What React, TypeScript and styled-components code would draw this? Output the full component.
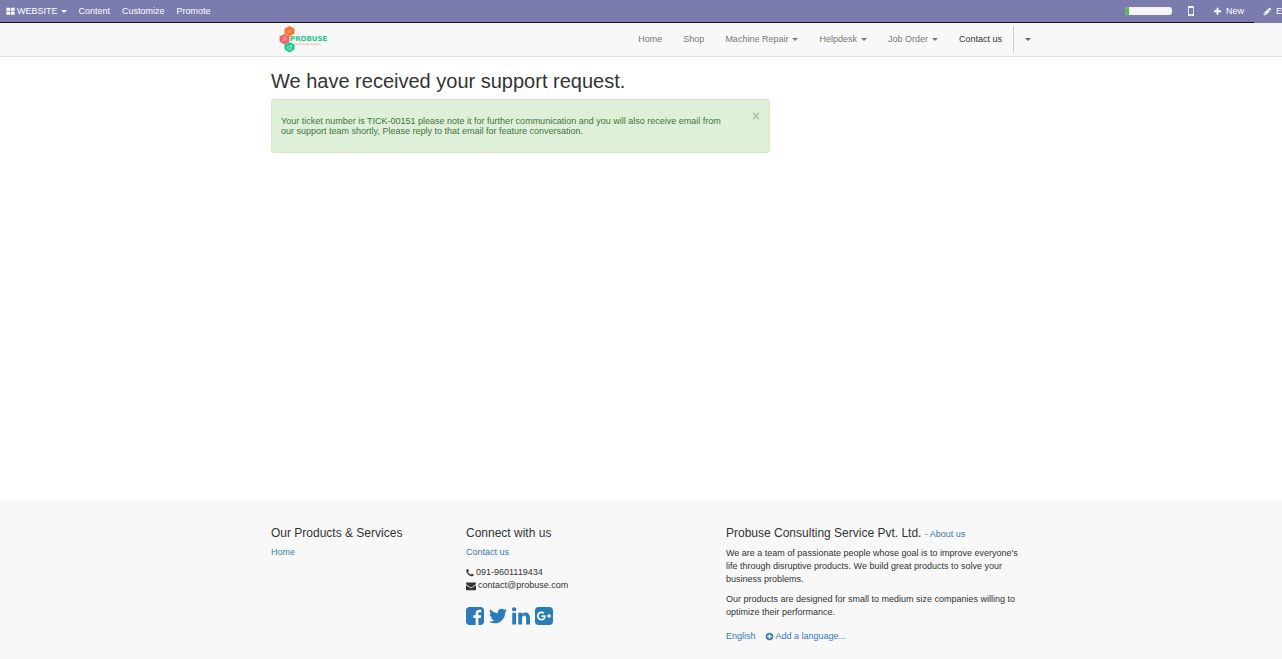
import React from "react";
import styled, { createGlobalStyle } from "styled-components";

const GlobalStyle = createGlobalStyle`
  *, *::before, *::after { box-sizing: border-box; }
  html { overflow-x: hidden; }
  body {
    margin: 0;
    overflow-x: hidden;
    background: #fff;
    color: #333;
    font: 9px/13px "Liberation Sans", Arial, sans-serif;
  }
  h1, h4, p, ul { margin: 0; padding: 0; }
  h1, h4 { font-weight: 400; }
  ul { list-style: none; }
  button { font: inherit; background: none; border: 0; padding: 0; cursor: pointer; }
`;

const Page = styled.div`
  display: flex;
  flex-direction: column;
  width: calc(100% + 20px);
  min-height: 100vh;
`;

const Container = styled.div`
  width: 100%;
  max-width: 780px;
  margin: 0 auto;
  padding: 0 10px;
`;

/* Icons */
const Svg = styled.svg<{ $w: number; $h?: number }>`
  display: block;
  flex: none;
  width: ${(p) => p.$w}px;
  height: ${(p) => p.$h ?? p.$w}px;
  fill: currentColor;
`;

const icons = {
  thLarge:
    "M832 1024v384q0 52-38 90t-90 38h-512q-52 0-90-38t-38-90v-384q0-52 38-90t90-38h512q52 0 90 38t38 90zm0-768v384q0 52-38 90t-90 38h-512q-52 0-90-38t-38-90v-384q0-52 38-90t90-38h512q52 0 90 38t38 90zm896 768v384q0 52-38 90t-90 38h-512q-52 0-90-38t-38-90v-384q0-52 38-90t90-38h512q52 0 90 38t38 90zm0-768v384q0 52-38 90t-90 38h-512q-52 0-90-38t-38-90v-384q0-52 38-90t90-38h512q52 0 90 38t38 90z",
  mobile:
    "M976 1408q0-33-23.5-56.5t-56.5-23.5-56.5 23.5-23.5 56.5 23.5 56.5 56.5 23.5 56.5-23.5 23.5-56.5zm208-160v-704q0-13-9.5-22.5t-22.5-9.5h-512q-13 0-22.5 9.5t-9.5 22.5v704q0 13 9.5 22.5t22.5 9.5h512q13 0 22.5-9.5t9.5-22.5zm-192-848q0-16-16-16h-160q-16 0-16 16t16 16h160q16 0 16-16zm288-16v1024q0 52-38 90t-90 38h-512q-52 0-90-38t-38-90v-1024q0-52 38-90t90-38h512q52 0 90 38t38 90z",
  plus: "M1600 736v192q0 40-28 68t-68 28h-416v416q0 40-28 68t-68 28h-192q-40 0-68-28t-28-68v-416h-416q-40 0-68-28t-28-68v-192q0-40 28-68t68-28h416v-416q0-40 28-68t68-28h192q40 0 68 28t28 68v416h416q40 0 68 28t28 68z",
  pencil:
    "M491 1536l91-91-235-235-91 91v107h128v128h107zm523-928q0-22-22-22-10 0-17 7l-542 542q-7 7-7 17 0 22 22 22 10 0 17-7l542-542q7-7 7-17zm-54-192l416 416-832 832h-416v-416zm683 96q0 53-37 90l-166 166-416-416 166-165q36-38 90-38 53 0 91 38l235 234q37 39 37 91z",
  phone:
    "M1600 1240q0 27-10 70.5t-21 68.5q-21 50-122 106-94 51-186 51-27 0-52.5-3.5t-57.5-12.5-47.5-14.5-55.5-20.5-49-18q-98-35-175-83-128-79-264.5-215.5t-215.5-264.5q-48-77-83-175-3-9-18-49t-20.5-55.5-14.5-47.5-12.5-57.5-3.5-52.5q0-92 51-186 56-101 106-122 25-11 68.5-21t70.5-10q14 0 21 3 18 6 53 76 11 19 30 54t35 63.5 31 53.5q3 4 17.5 25t21.5 35.5 7 28.5q0 20-28.5 50t-62 55-62 53-28.5 46q0 9 5 22.5t8.5 20.5 14 24 11.5 19q76 137 174 235t235 174q2 1 19 11.5t24 14 20.5 8.5 22.5 5q18 0 46-28.5t53-62 55-62 50-28.5q14 0 28.5 7t35.5 21.5 25 17.5q25 15 53.5 31t63.5 35 54 30q70 35 76 53 3 7 3 21z",
  envelope:
    "M1792 710v794q0 66-47 113t-113 47h-1472q-66 0-113-47t-47-113v-794q44 49 101 87 362 246 497 345 57 42 92.5 65.5t94.5 48 110 24.5h2q51 0 110-24.5t94.5-48 92.5-65.5q170-123 498-345 57-39 100-87zm0-294q0 79-49 151t-122 123q-376 261-468 325-10 7-42.5 31t-54 38.5-52 32.5-57.5 27-50 9h-2q-23 0-50-9t-57.5-27-52-32.5-54-38.5-42.5-31q-91-64-262-182.5t-205-142.5q-62-42-117-115.5t-55-136.5q0-78 41.5-130t118.5-52h1472q65 0 112.5 47t47.5 113z",
  plusCircle:
    "M1344 960v-128q0-26-19-45t-45-19h-256v-256q0-26-19-45t-45-19h-128q-26 0-45 19t-19 45v256h-256q-26 0-45 19t-19 45v128q0 26 19 45t45 19h256v256q0 26 19 45t45 19h128q26 0 45-19t19-45v-256h256q26 0 45-19t19-45zm320-64q0 209-103 385.5t-279.5 279.5-385.5 103-385.5-103-279.5-279.5-103-385.5 103-385.5 279.5-279.5 385.5-103 385.5 103 279.5 279.5 103 385.5z",
  facebook:
    "M1376 128q119 0 203.5 84.5t84.5 203.5v960q0 119-84.5 203.5t-203.5 84.5h-188v-595h199l30-232h-229v-148q0-56 23.5-84t91.5-28l122-1v-207q-63-9-178-9-136 0-217.5 80t-81.5 226v171h-200v232h200v595h-532q-119 0-203.5-84.5t-84.5-203.5v-960q0-119 84.5-203.5t203.5-84.5h960z",
  twitter:
    "M1684 408q-67 98-162 167 1 14 1 42 0 130-38 259.5t-115.5 248.5-184.5 210.5-258 146-323 54.5q-271 0-496-145 35 4 78 4 225 0 401-138-105-2-188-64.5t-114-159.5q33 5 61 5 43 0 85-11-112-23-185.5-111.5t-73.5-205.5v-4q68 38 146 41-66-44-105-115t-39-154q0-88 44-163 121 149 294.5 238.5t371.5 99.5q-8-38-8-74 0-134 94.5-228.5t228.5-94.5q140 0 236 102 109-21 205-78-37 115-142 178 93-10 186-50z",
  linkedin:
    "M477 625v991h-330v-991h330zm21-306q1 73-50.5 122t-135.5 49h-2q-82 0-132-49t-50-122q0-74 51.5-122.5t134.5-48.5 133 48.5 51 122.5zm1166 729v568h-329v-530q0-105-40.5-164.5t-126.5-59.5q-63 0-105.5 34.5t-63.5 85.5q-11 30-11 81v553h-329q2-399 2-647t-1-296l-1-48h329v144h-2q20-32 41-56t56.5-52 87-43.5 114.5-15.5q171 0 275 113.5t104 332.5z",
  googlePlus:
    "M1045 905q0-26-6-64h-362v132h217q-3 24-16.5 50t-37.5 53-66.5 44.5-96.5 17.5q-99 0-169-71t-70-171 70-171 169-71q92 0 153 59l104-101q-108-100-257-100-160 0-272 112.5t-112 271.5 112 271.5 272 112.5q165 0 266.5-105t101.5-270zm345 46h109v-110h-109v-110h-110v110h-110v110h110v110h110v-110zm274-535v960q0 119-84.5 203.5t-203.5 84.5h-960q-119 0-203.5-84.5t-84.5-203.5v-960q0-119 84.5-203.5t203.5-84.5h960q119 0 203.5 84.5t84.5 203.5z",
};

type IconProps = { name: keyof typeof icons; w?: number; box?: string };
const Icon = ({ name, w = 9, box = "0 0 1792 1792" }: IconProps) => (
  <Svg $w={w} viewBox={box} aria-hidden="true">
    <path d={icons[name]} />
  </Svg>
);

const Caret = styled.span`
  display: inline-block;
  border: 3px solid transparent;
  border-top-color: currentColor;
  border-bottom: 0;
`;

/* Editor bar */
const AdminBar = styled.nav`
  display: flex;
  justify-content: space-between;
  height: 23px;
  background: #7c7bad;
`;

const AdminGroup = styled.div`
  display: flex;
  align-items: stretch;
  border-bottom: 1px solid #111;
`;

const AdminMenu = styled(AdminGroup)`
  flex: 1;
  gap: 12px;
  padding-left: 6px;
`;

const AdminButton = styled.button`
  display: flex;
  align-items: center;
  gap: 4px;
  color: #fff;
`;

const SiteButton = styled(AdminButton)`
  gap: 2px;
  ${Caret} { margin-left: 1px; }
`;

const AdminTools = styled(AdminGroup)`
  align-items: center;
  padding-right: 10px;
`;

const Meter = styled.div`
  width: 47px;
  height: 8px;
  margin-right: 12px;
  border-radius: 3px;
  background: #f5f5f5;
  overflow: hidden;
`;

const MeterFill = styled.div`
  width: 4px;
  height: 100%;
  background: #5cb85c;
`;

const MobileButton = styled(AdminButton)`
  margin-right: 15px;
`;

const EditButton = styled(AdminButton)`
  width: 48px;
  padding-left: 9px;
  border-bottom: 1px solid #7c7bad;
`;

/* Site header */
const SiteHeader = styled.header`
  height: 34px;
  background: #f8f8f8;
  border-bottom: 1px solid #e0e0e0;
`;

const HeaderRow = styled(Container)`
  display: flex;
  justify-content: space-between;
  height: 33px;
`;

const Brand = styled.a`
  display: block;
  padding: 3px 0 0 8px;
`;

const NavList = styled.ul`
  display: flex;
  align-items: flex-start;
  gap: 1px;
  padding-top: 3px;
`;

const NavLink = styled.a<{ $active?: boolean }>`
  display: flex;
  align-items: center;
  gap: 4px;
  height: 27px;
  padding: 0 10px;
  color: ${(p) => (p.$active ? "#333" : "#777")};
  text-decoration: none;
`;

const UserItem = styled.li`
  border-left: 1px solid #ccc;
`;

const UserButton = styled.button`
  display: flex;
  align-items: center;
  height: 27px;
  padding-left: 11px;
  color: #666;
`;

/* Message */
const Main = styled.main`
  flex: 1 0 auto;
`;

const Title = styled.h1`
  padding-top: 13px;
  font-size: 20px;
  line-height: 22px;
`;

const Alert = styled.div`
  display: flex;
  align-items: flex-start;
  justify-content: space-between;
  max-width: 499px;
  margin-top: 7px;
  padding: 9px 9px 15px;
  border: 1px solid #d6e9c6;
  border-radius: 3px;
  background: #dff0d8;
  color: #3c763d;
  line-height: 10px;
`;

const AlertText = styled.p`
  max-width: 450px;
  padding: 7px 0 1px;
`;

const CloseButton = styled.button`
  color: #000;
  opacity: 0.2;
  font-size: 14px;
  font-weight: 700;
  line-height: 14px;
`;

/* Footer */
const Footer = styled.footer`
  padding: 27px 0 16px;
  background: #f8f8f8;
`;

const Columns = styled(Container)`
  display: grid;
  grid-template-columns: 3fr 4fr 5fr;
  max-width: 800px;
`;

const Column = styled.div`
  padding: 0 10px;
`;

const Heading = styled.h4`
  margin-bottom: 5px;
  font-size: 12px;
  line-height: 15px;
  small { font-size: 9px; color: #777; }
`;

const Link = styled.a`
  color: #337ab7;
  text-decoration: none;
`;

const Para = styled.p`
  margin-bottom: 7px;
`;

const ContactLine = styled.li`
  display: flex;
  align-items: center;
  gap: 2px;
`;

const Social = styled.div`
  display: flex;
  gap: 5px;
  margin-top: 15px;
`;

const SocialLink = styled(Link)`
  color: #2b7bb9;
`;

const Languages = styled.div`
  display: flex;
  gap: 9px;
  margin-top: 11px;
`;

const LanguageLink = styled(Link)`
  display: flex;
  align-items: center;
  gap: 2px;
`;

const LogoName = styled.text`
  font: 700 7px/7px "DejaVu Sans", sans-serif;
  fill: #1fc98e;
`;

const LogoTagline = styled.text`
  font: 2px/2px "DejaVu Sans", sans-serif;
  fill: #f47b33;
`;

const Logo = () => (
  <Svg $w={52} $h={28} viewBox="0 0 52 28" role="img" aria-label="Probuse">
    <path fill="#f47b33" d="M10.500 0l5 2.500v5l-5 3-5-3v-5z" />
    <path fill="#f4606c" d="M5.500 8l5 2.500v5l-5 3-5-3v-5z" />
    <path fill="#1fc98e" d="M10.500 16l5 2.500v5l-5 3-5-3v-5z" />
    <g fill="none" stroke="#fff" strokeOpacity=".55">
      <path d="M8.500 7l3.500-3" />
      <circle cx="6" cy="12.500" r="1.500" />
      <path d="M4.900 13.600l-1.500 1.500M8 21.500l5-2.500-2 5z" />
    </g>
    <LogoName x="11" y="15">PROBUSE</LogoName>
    <LogoTagline x="16" y="19">PROFESSIONAL BUSINESS</LogoTagline>
  </Svg>
);

const navItems = [
  { label: "Home" },
  { label: "Shop" },
  { label: "Machine Repair", menu: true },
  { label: "Helpdesk", menu: true },
  { label: "Job Order", menu: true },
  { label: "Contact us", active: true },
];

const tight = "128 128 1536 1536";

export default function App() {
  return (
    <>
      <GlobalStyle />
      <Page>
        <AdminBar>
          <AdminMenu>
            <SiteButton>
              <Icon name="thLarge" />
              WEBSITE
              <Caret />
            </SiteButton>
            <AdminButton>Content</AdminButton>
            <AdminButton>Customize</AdminButton>
            <AdminButton>Promote</AdminButton>
          </AdminMenu>
          <AdminTools>
            <Meter><MeterFill /></Meter>
            <MobileButton aria-label="Mobile preview"><Icon name="mobile" w={14} /></MobileButton>
            <AdminButton><Icon name="plus" />New</AdminButton>
          </AdminTools>
          <EditButton><Icon name="pencil" />Edit</EditButton>
        </AdminBar>

        <SiteHeader>
          <HeaderRow>
            <Brand href="#"><Logo /></Brand>
            <NavList>
              {navItems.map((item) => (
                <li key={item.label}>
                  <NavLink href="#" $active={item.active}>
                    {item.label}
                    {item.menu && <Caret />}
                  </NavLink>
                </li>
              ))}
              <UserItem>
                <UserButton aria-label="Account menu"><Caret /></UserButton>
              </UserItem>
            </NavList>
          </HeaderRow>
        </SiteHeader>

        <Main>
          <Container>
            <Title>We have received your support request.</Title>
            <Alert role="alert">
              <AlertText>
                Your ticket number is TICK-00151 please note it for further communication and you will also
                receive email from our support team shortly, Please reply to that email for feature conversation.
              </AlertText>
              <CloseButton aria-label="Close">×</CloseButton>
            </Alert>
          </Container>
        </Main>

        <Footer>
          <Columns>
            <Column>
              <Heading>Our Products &amp; Services</Heading>
              <Link href="#">Home</Link>
            </Column>
            <Column>
              <Heading>Connect with us</Heading>
              <Para><Link href="#">Contact us</Link></Para>
              <ul>
                <ContactLine><Icon name="phone" w={8} box={tight} />091-9601119434</ContactLine>
                <ContactLine><Icon name="envelope" w={10} />contact@probuse.com</ContactLine>
              </ul>
              <Social>
                <SocialLink href="#" aria-label="Facebook"><Icon name="facebook" w={18} box={tight} /></SocialLink>
                <SocialLink href="#" aria-label="Twitter"><Icon name="twitter" w={18} box="108 128 1576 1536" /></SocialLink>
                <SocialLink href="#" aria-label="LinkedIn"><Icon name="linkedin" w={18} box={tight} /></SocialLink>
                <SocialLink href="#" aria-label="Google Plus"><Icon name="googlePlus" w={18} box={tight} /></SocialLink>
              </Social>
            </Column>
            <Column>
              <Heading>
                Probuse Consulting Service Pvt. Ltd. <small>- <Link href="#">About us</Link></small>
              </Heading>
              <Para>
                We are a team of passionate people whose goal is to improve everyone's life through disruptive
                products. We build great products to solve your business problems.
              </Para>
              <Para>
                Our products are designed for small to medium size companies willing to optimize their performance.
              </Para>
              <Languages>
                <Link href="#">English</Link>
                <LanguageLink href="#"><Icon name="plusCircle" />Add a language...</LanguageLink>
              </Languages>
            </Column>
          </Columns>
        </Footer>
      </Page>
    </>
  );
}
